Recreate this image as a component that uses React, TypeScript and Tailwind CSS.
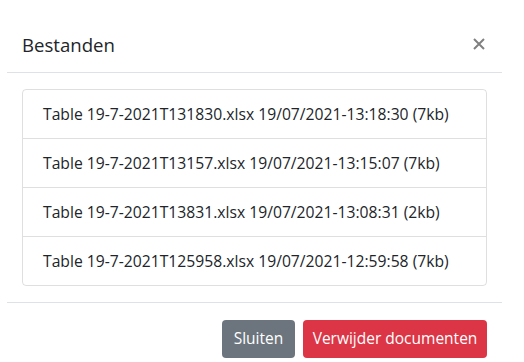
const FILES = [
  'Table 19-7-2021T131830.xlsx 19/07/2021-13:18:30 (7kb)',
  'Table 19-7-2021T13157.xlsx 19/07/2021-13:15:07 (7kb)',
  'Table 19-7-2021T13831.xlsx 19/07/2021-13:08:31 (2kb)',
  'Table 19-7-2021T125958.xlsx 19/07/2021-12:59:58 (7kb)',
];

export default function App() {
  return (
    <div className="w-[524px] h-[362px] bg-white overflow-hidden text-[#212529] font-['Open_Sans',sans-serif]">
      <div className="ml-[7px] mt-[17px] w-[495px]">
        {/* header */}
        <div className="flex items-center justify-between h-[56px] px-[15px] border-b border-[#dee2e6]">
          <h5 className="text-[18.6px] leading-[24px] font-medium">Bestanden</h5>
          <button className="mr-[2px] -mt-[2px] text-[#808080]">
            <svg width="12" height="12" viewBox="0 0 12 12">
              <path d="M1 1L11 11M11 1L1 11" stroke="currentColor" strokeWidth="2" />
            </svg>
          </button>
        </div>

        {/* body */}
        <div className="px-[15px] pt-[16px] pb-[16px]">
          <ul className="border border-black/[0.125] rounded">
            {FILES.map((f, i) => (
              <li
                key={f}
                className={`px-5 py-3 text-[15.7px] leading-[24px] ${i > 0 ? 'border-t border-black/[0.125]' : ''}`}
              >
                {f}
              </li>
            ))}
          </ul>
        </div>

        {/* footer */}
        <div className="flex justify-end gap-2 px-[15px] pt-[17px] border-t border-[#dee2e6]">
          <button className="w-[73px] h-[38px] bg-[#6c757d] text-white text-[15.5px] rounded">Sluiten</button>
          <button className="w-[184px] h-[38px] bg-[#dc3545] text-white text-[15.5px] rounded">Verwijder documenten</button>
        </div>
      </div>
    </div>
  );
}
